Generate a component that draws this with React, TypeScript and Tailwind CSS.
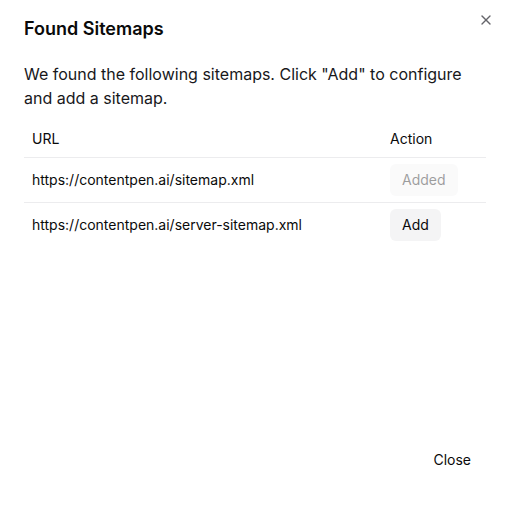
import React from "react";

export default function App() {
  return (
    <div
      className="relative flex h-[508px] w-[510px] flex-col bg-white px-6 pb-[29px] pt-[15px] text-[#0a0a0a]"
      style={{ fontFamily: "Inter, 'Noto Sans', sans-serif" }}
    >
      <button className="absolute right-[16px] top-[12px] flex h-4 w-4 items-center justify-center text-[#3f3f46] opacity-80">
        <svg width="16" height="16" viewBox="0 0 24 24" fill="none" stroke="currentColor" strokeWidth="2" strokeLinecap="round" strokeLinejoin="round">
          <path d="M18 6 6 18" />
          <path d="m6 6 12 12" />
        </svg>
      </button>
      <h2 className="text-[18px] font-semibold leading-7">Found Sitemaps</h2>
      <p className="mt-[19px] text-[16px] leading-6 text-[#18181b]">
        We found the following sitemaps. Click "Add" to configure and add a sitemap.
      </p>
      <table className="mt-[11px] w-full border-collapse text-[14px] leading-5">
        <thead>
          <tr className="border-b border-[#ececee]">
            <th className="h-[36px] px-2 text-left font-normal">URL</th>
            <th className="h-[36px] w-[104px] px-2 text-left font-normal">Action</th>
          </tr>
        </thead>
        <tbody>
          <tr className="border-b border-[#ececee]">
            <td className="px-2 py-1.5">https://contentpen.ai/sitemap.xml</td>
            <td className="px-2 py-1.5">
              <button className="h-8 rounded-md bg-[#f4f4f5] px-3 font-normal text-[#0a0a0a] opacity-40">Added</button>
            </td>
          </tr>
          <tr>
            <td className="px-2 py-1.5">https://contentpen.ai/server-sitemap.xml</td>
            <td className="px-2 py-1.5">
              <button className="h-8 rounded-md bg-[#f4f4f5] px-3 font-normal text-[#0a0a0a]">Add</button>
            </td>
          </tr>
        </tbody>
      </table>
      <div className="mt-auto flex justify-end">
        <button className="-mr-[1px] h-10 rounded-md px-4 text-[14px] font-normal">Close</button>
      </div>
    </div>
  );
}
